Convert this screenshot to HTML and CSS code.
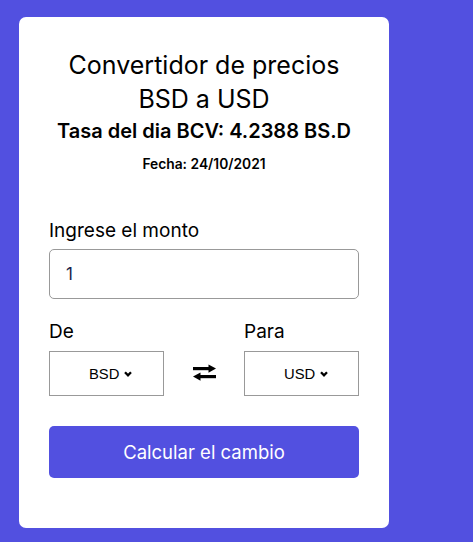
FILE: index.html
```html
<!DOCTYPE html>
<html lang="es">
<head>
<meta charset="utf-8">
<title>Convertidor de precios</title>
<link rel="stylesheet" href="styles.css">
</head>
<body>
<main class="card">
  <header class="head">
    <h1 class="title">Convertidor de precios<br>BSD a USD</h1>
    <h2 class="rate">Tasa del dia BCV: 4.2388 BS.D</h2>
    <p class="date">Fecha: 24/10/2021</p>
  </header>
  <form class="form">
    <label class="label label-amount" for="monto">Ingrese el monto</label>
    <input class="input" id="monto" type="text" value="1">
    <div class="pair">
      <span class="label">De</span>
      <span class="label label-to">Para</span>
      <div class="select">
        <span>BSD</span>
        <svg class="chev" width="8" height="6" viewBox="0 0 8 6"><polyline points="1,1.2 4,4.3 7,1.2" fill="none" stroke="#000" stroke-width="2.3"/></svg>
      </div>
      <div class="swap">
        <svg width="23" height="17" viewBox="0 0 23 17">
          <rect x="0" y="3" width="17" height="3.2" fill="#000"/>
          <polygon points="15.5,0.5 23,4.6 15.5,8.7" fill="#000"/>
          <rect x="6" y="11" width="17" height="3.2" fill="#000"/>
          <polygon points="7.5,8.5 0,12.6 7.5,16.7" fill="#000"/>
        </svg>
      </div>
      <div class="select">
        <span>USD</span>
        <svg class="chev" width="8" height="6" viewBox="0 0 8 6"><polyline points="1,1.2 4,4.3 7,1.2" fill="none" stroke="#000" stroke-width="2.3"/></svg>
      </div>
    </div>
    <button class="btn" type="button">Calcular el cambio</button>
  </form>
</main>
</body>
</html>
```
FILE: styles.css
```css
html, body {
  margin: 0;
  background: #5250e0;
}
body {
  padding: 17px 19px;
  font-family: Inter, "Open Sans", sans-serif;
  color: #000;
}
.card {
  box-sizing: border-box;
  width: 370px;
  height: 511px;
  background: #fff;
  border-radius: 7px;
  padding: 31px 30px 0;
}
.head {
  text-align: center;
}
.title {
  margin: 0;
  font-size: 25px;
  font-weight: 400;
  line-height: 34px;
}
.rate {
  margin: 3px 0 0;
  font-size: 20px;
  font-weight: 600;
  line-height: 24px;
}
.date {
  margin: 11px 0 0;
  font-size: 13.8px;
  font-weight: 600;
  line-height: 20px;
}
.form {
  display: flex;
  flex-direction: column;
  margin-top: 45px;
}
.label {
  display: block;
  font-size: 19px;
  line-height: 24px;
}
.label-amount {
  margin-bottom: 6px;
}
.input {
  box-sizing: border-box;
  width: 310px;
  height: 50px;
  margin: 0;
  padding: 0 0 0 16px;
  border: 1px solid #999;
  border-radius: 5px;
  font-family: Inter, sans-serif;
  font-size: 17px;
  color: #1a1f4a;
  outline: none;
}
.pair {
  display: grid;
  grid-template-columns: 115px 1fr 115px;
  grid-template-rows: 24px 45px;
  row-gap: 7px;
  margin-top: 21px;
}
.label-to {
  grid-column: 3;
}
.select {
  box-sizing: border-box;
  display: flex;
  align-items: center;
  gap: 5px;
  padding-left: 39px;
  border: 1px solid #999;
  font-family: "Liberation Sans", Arial, sans-serif;
  font-size: 14.8px;
  color: #000;
}
.chev {
  display: block;
  margin-top: 1px;
}
.swap {
  display: flex;
  align-items: center;
  justify-content: center;
  padding-left: 1px;
  padding-bottom: 2px;
}
.swap svg {
  display: block;
}
.btn {
  height: 52px;
  margin-top: 30px;
  border: none;
  border-radius: 5px;
  background: #5250e0;
  color: #fff;
  font-family: Inter, sans-serif;
  font-size: 18.5px;
  font-weight: 400;
  cursor: pointer;
}
```
